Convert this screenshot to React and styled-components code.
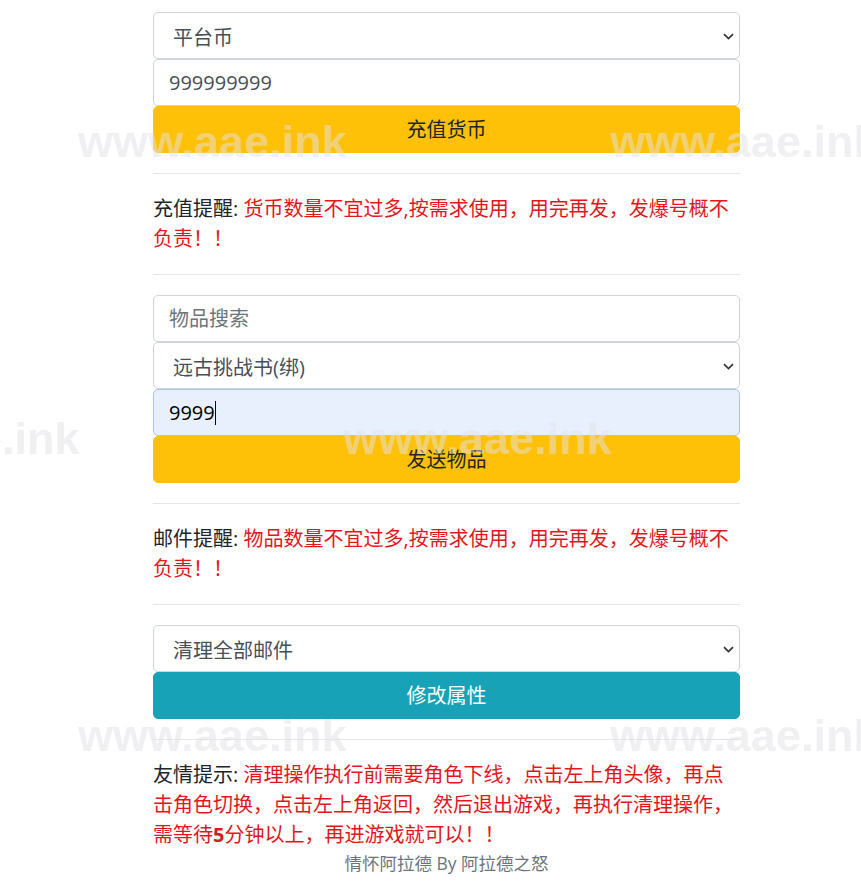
import React from 'react';
import styled, { createGlobalStyle } from 'styled-components';

const GlobalStyle = createGlobalStyle`
  html, body {
    margin: 0;
    padding: 0;
    background: #fff;
  }
  body {
    font-family: "Open Sans", "Noto Sans CJK SC", sans-serif;
    font-size: 20px;
    line-height: 1.5;
    color: #212529;
  }
  * { box-sizing: border-box; }
`;

const marks = [
  { x: 78, y: 119 },
  { x: 610, y: 119 },
  { x: -189, y: 416 },
  { x: 343, y: 416 },
  { x: 78, y: 713 },
  { x: 610, y: 713 },
];

const App = () => {
  return (
    <>
      <GlobalStyle />
      <Page>
        <Form>
          <Field>
            <Select defaultValue="platform">
              <option value="platform">平台币</option>
            </Select>
            <Chevron />
          </Field>
          <Input defaultValue="999999999" />
          <Button $variant="warning">充值货币</Button>
        </Form>

        <Rule />
        <Notice label="充值提醒:">货币数量不宜过多,按需求使用，用完再发，发爆号概不负责！！</Notice>
        <Rule />

        <Form>
          <Input placeholder="物品搜索" />
          <Field>
            <Select defaultValue="book">
              <option value="book">远古挑战书(绑)</option>
            </Select>
            <Chevron />
          </Field>
          <Field>
            <Input $filled defaultValue="9999" />
            <Caret />
          </Field>
          <Button $variant="warning">发送物品</Button>
        </Form>

        <Rule />
        <Notice label="邮件提醒:">物品数量不宜过多,按需求使用，用完再发，发爆号概不负责！！</Notice>
        <Rule />

        <Form>
          <Field>
            <Select defaultValue="clear">
              <option value="clear">清理全部邮件</option>
            </Select>
            <Chevron />
          </Field>
          <Button $variant="info">修改属性</Button>
        </Form>

        <Rule />
        <Notice label="友情提示:">
          清理操作执行前需要角色下线，点击左上角头像，再点击角色切换，点击左上角返回，然后退出游戏，再执行清理操作，需等待<b>5</b>分钟以上，再进游戏就可以！！
        </Notice>
        <Footer>情怀阿拉德 By 阿拉德之怒</Footer>
      </Page>

      <Watermark>
        {marks.map((m, i) => (
          <Mark key={i} style={{ left: m.x, top: m.y }}>www.aae.ink</Mark>
        ))}
      </Watermark>
    </>
  );
};

const Notice = ({ label, children }) => (
  <Paragraph>
    {label} <Red>{children}</Red>
  </Paragraph>
);

const Chevron = () => (
  <ArrowIcon width="11" height="7" viewBox="0 0 11 7">
    <path d="M1 1.2l4.5 4.3L10 1.2" fill="none" stroke="#333" strokeWidth="1.7" />
  </ArrowIcon>
);

export default App;

const Page = styled.div`
  width: 587px;
  margin-left: 153px;
  padding-top: 12px;
  padding-bottom: 20px;
`;

const Form = styled.div`
  display: flex;
  flex-direction: column;
`;

const Field = styled.div`
  position: relative;
  display: flex;
`;

const controlBase = `
  width: 100%;
  height: 47px;
  border: 1px solid #ced4da;
  border-radius: 5px;
  font-family: "Open Sans", "Noto Sans CJK SC", sans-serif;
  font-size: 20px;
  line-height: 1.5;
  color: #495057;
  background: #fff;
  outline: none;
  margin: 0;
`;

const Select = styled.select`
  ${controlBase}
  appearance: none;
  -webkit-appearance: none;
  padding: 4px 30px 0 19px;
`;

const Input = styled.input`
  ${controlBase}
  padding: 0 15px;
  background: ${(p) => (p.$filled ? '#e8f0fe' : '#fff')};
  border-color: ${(p) => (p.$filled ? '#a8c7e6' : '#ced4da')};
  color: ${(p) => (p.$filled ? '#000' : '#495057')};

  &::placeholder {
    color: #6c757d;
  }
`;

const ArrowIcon = styled.svg`
  position: absolute;
  right: 6px;
  top: 21px;
  pointer-events: none;
`;

const Caret = styled.span`
  position: absolute;
  left: 62px;
  top: 12px;
  width: 1px;
  height: 24px;
  background: #000;
`;

const Button = styled.button`
  width: 100%;
  height: 47px;
  border: 1px solid ${(p) => (p.$variant === 'info' ? '#17a2b8' : '#ffc107')};
  border-radius: 5px;
  background: ${(p) => (p.$variant === 'info' ? '#17a2b8' : '#ffc107')};
  color: ${(p) => (p.$variant === 'info' ? '#fff' : '#212529')};
  font-family: "Open Sans", "Noto Sans CJK SC", sans-serif;
  font-size: 20px;
  line-height: 1.5;
  padding: 0 15px;
  cursor: pointer;
`;

const Rule = styled.hr`
  margin: 20px 0;
  border: 0;
  border-top: 1px solid rgba(0, 0, 0, 0.1);
`;

const Paragraph = styled.p`
  margin: 0 0 20px;
  line-height: 30px;
  color: #212529;
`;

const Red = styled.span`
  color: #e3161c;

  b {
    font-weight: 700;
  }
`;

const Footer = styled.div`
  margin-top: -20px;
  text-align: center;
  font-size: 17.5px;
  line-height: 26px;
  color: #6c757d;
`;

const Watermark = styled.div`
  position: fixed;
  inset: 0;
  overflow: hidden;
  pointer-events: none;
  z-index: 10;
`;

const Mark = styled.span`
  position: absolute;
  font-family: "Liberation Sans", Arial, sans-serif;
  font-weight: 700;
  font-size: 45px;
  line-height: 1;
  white-space: nowrap;
  color: rgba(226, 226, 230, 0.5);
`;
